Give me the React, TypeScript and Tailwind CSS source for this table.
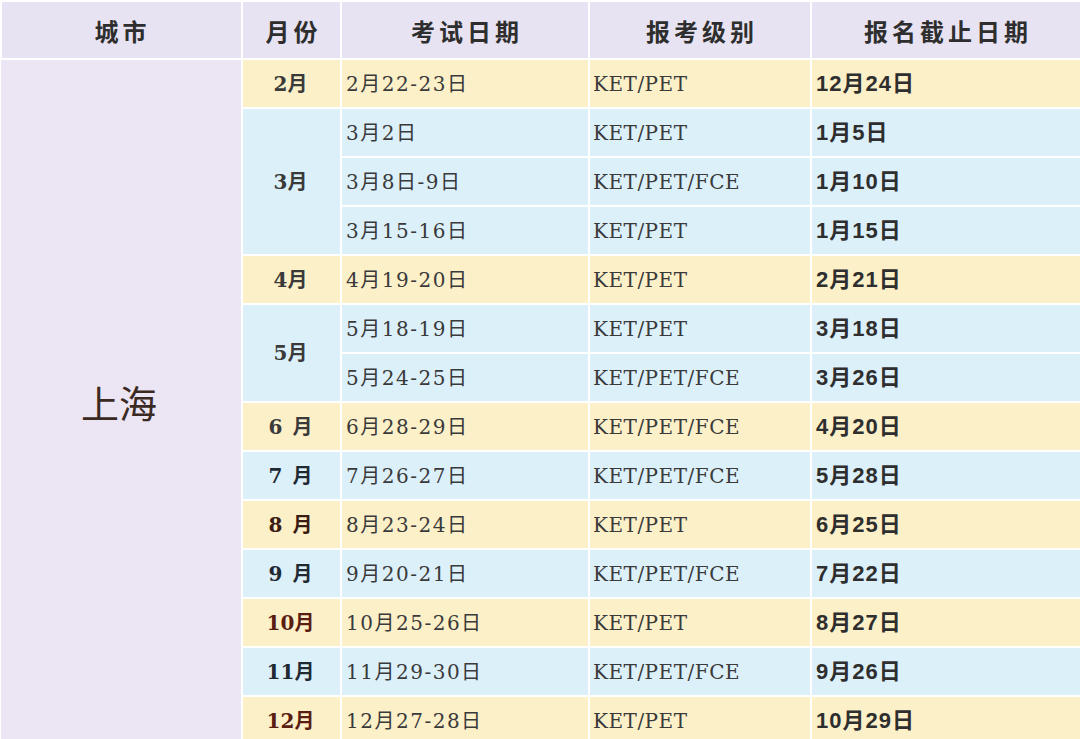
import React from "react";

type Row = { month?: string; span?: number; date: string; level: string; deadline: string; tone: "y" | "b"; monthColor?: string };

const ROWS: Row[] = [
  { month: "2月", span: 1, date: "2月22-23日", level: "KET/PET", deadline: "12月24日", tone: "y" },
  { month: "3月", span: 3, date: "3月2日", level: "KET/PET", deadline: "1月5日", tone: "b" },
  { date: "3月8日-9日", level: "KET/PET/FCE", deadline: "1月10日", tone: "b" },
  { date: "3月15-16日", level: "KET/PET", deadline: "1月15日", tone: "b" },
  { month: "4月", span: 1, date: "4月19-20日", level: "KET/PET", deadline: "2月21日", tone: "y" },
  { month: "5月", span: 2, date: "5月18-19日", level: "KET/PET", deadline: "3月18日", tone: "b" },
  { date: "5月24-25日", level: "KET/PET/FCE", deadline: "3月26日", tone: "b" },
  { month: "6\u2002月", span: 1, date: "6月28-29日", level: "KET/PET/FCE", deadline: "4月20日", tone: "y" },
  { month: "7\u2002月", span: 1, date: "7月26-27日", level: "KET/PET/FCE", deadline: "5月28日", tone: "b", monthColor: "text-[#1f2a33]" },
  { month: "8\u2002月", span: 1, date: "8月23-24日", level: "KET/PET", deadline: "6月25日", tone: "y", monthColor: "text-[#3a1c12]" },
  { month: "9\u2002月", span: 1, date: "9月20-21日", level: "KET/PET/FCE", deadline: "7月22日", tone: "b", monthColor: "text-[#1f2a33]" },
  { month: "10月", span: 1, date: "10月25-26日", level: "KET/PET", deadline: "8月27日", tone: "y", monthColor: "text-[#5a1d12]" },
  { month: "11月", span: 1, date: "11月29-30日", level: "KET/PET/FCE", deadline: "9月26日", tone: "b", monthColor: "text-[#1f2a33]" },
  { month: "12月", span: 1, date: "12月27-28日", level: "KET/PET", deadline: "10月29日", tone: "y", monthColor: "text-[#5a1d12]" },
];

const serif = "font-['DejaVu_Serif','Noto_Sans_CJK_SC',serif]";
const sans = "font-['Liberation_Sans','Noto_Sans_CJK_SC',sans-serif]";

export default function App() {
  return (
    <div className="w-[1080px] h-[739px] overflow-hidden bg-white pt-[2px]">
      <table className="w-full border-collapse table-fixed">
        <colgroup>
          <col className="w-[241px]" />
          <col className="w-[99px]" />
          <col className="w-[248px]" />
          <col className="w-[222px]" />
          <col />
        </colgroup>
        <thead>
          <tr className="h-[57px] bg-[#e8e3f2] text-[#2e2e2e] text-[24px] font-bold font-['Noto_Sans_CJK_SC',sans-serif]">
            <th className="border-2 border-white border-t-0 pt-[1px] pl-[2px] tracking-[4px]">城市</th>
            <th className="border-2 border-white border-t-0 pt-[1px] pl-[4px] tracking-[4px]">月份</th>
            <th className="border-2 border-white border-t-0 pt-[1px] pl-[4px] tracking-[4px]">考试日期</th>
            <th className="border-2 border-white border-t-0 pt-[1px] pl-[4px] tracking-[4px]">报考级别</th>
            <th className="border-2 border-white border-t-0 border-r-0 pt-[1px] pl-[4px] tracking-[4px]">报名截止日期</th>
          </tr>
        </thead>
        <tbody className="text-[20px] text-[#3a3a3a]">
          {ROWS.map((r, i) => {
            const bg = r.tone === "y" ? "bg-[#fcf0c9]" : "bg-[#dcf0fa]";
            return (
              <tr key={i} className="h-[49px]">
                {i === 0 && (
                  <td rowSpan={ROWS.length} className="align-top bg-[#ebe5f4] border-2 border-l-0 border-white text-center pt-[313px] pr-[4px] text-[38px] text-[#3a2a22] font-['Noto_Sans_CJK_SC',serif]">
                    上海
                  </td>
                )}
                {r.month && (
                  <td rowSpan={r.span} className={`${bg} border-2 border-white text-center font-bold pr-[2px] ${serif} ${r.monthColor ?? "text-[#3a3a3a]"}`}>
                    {r.month}
                  </td>
                )}
                <td className={`${bg} border-2 border-white pl-[4px] tracking-[1.5px] ${serif}`}>{r.date}</td>
                <td className={`${bg} border-2 border-white pl-[3px] tracking-[0.5px] ${serif}`}>{r.level}</td>
                <td className={`${bg} border-2 border-r-0 border-white pl-[4px] text-[22px] tracking-[1px] font-bold text-[#2e2e2e] ${sans}`}>{r.deadline}</td>
              </tr>
            );
          })}
        </tbody>
      </table>
    </div>
  );
}
